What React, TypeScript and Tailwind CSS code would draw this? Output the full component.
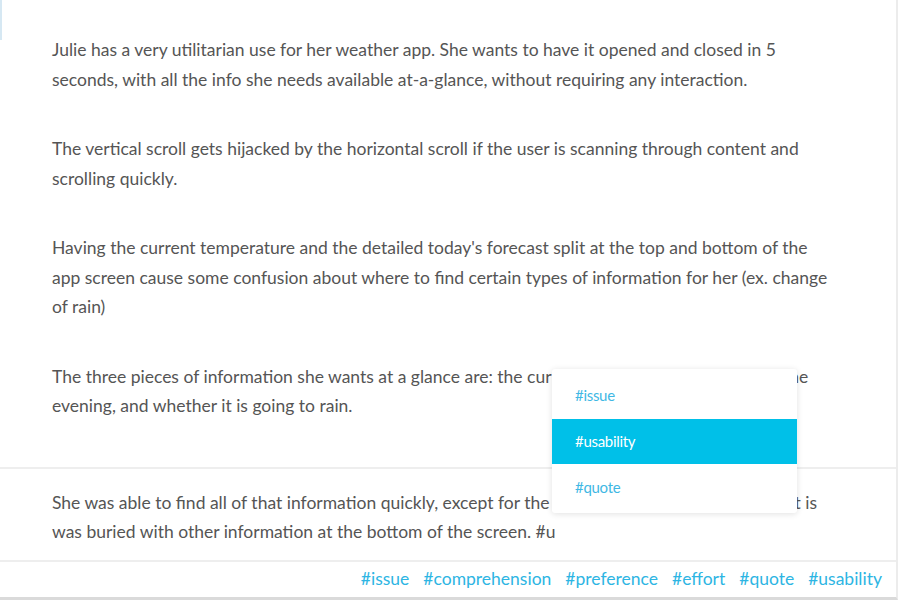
import React from "react";

const font = { fontFamily: "Lato, 'Open Sans', sans-serif" };

export default function App() {
  const tags = ["#issue", "#comprehension", "#preference", "#effort", "#quote", "#usability"];
  return (
    <div className="relative w-[900px] h-[600px] bg-white overflow-hidden" style={font}>
      <div className="absolute left-0 top-0 w-[2px] h-[40px] bg-[#d6e8f3]" />
      <div className="flex flex-col h-full w-[898px] border-r-2 border-[#ececec] border-b-[3px] border-b-[#dadada]">
        <div className="pl-[52px] pr-[20px] pt-[35px] pb-[46px] border-b-2 border-[#eeeeee] text-[17.5px] leading-[29.5px] text-[#555555] flex flex-col gap-[40px] whitespace-nowrap">
          <p>
            Julie has a very utilitarian use for her weather app. She wants to have it opened and closed in 5<br />
            seconds, with all the info she needs available at-a-glance, without requiring any interaction.
          </p>
          <p>
            The vertical scroll gets hijacked by the horizontal scroll if the user is scanning through content and<br />
            scrolling quickly.
          </p>
          <p>
            Having the current temperature and the detailed today's forecast split at the top and bottom of the<br />
            app screen cause some confusion about where to find certain types of information for her (ex. change<br />
            of rain)
          </p>
          <p>
            The three pieces of information she wants at a glance are: the current temperature, the temp in the<br />
            evening, and whether it is going to rain.
          </p>
        </div>
        <div className="pl-[52px] pr-[20px] pt-[19px] pb-[13px] border-b-2 border-[#eeeeee] text-[17.5px] leading-[29.5px] text-[#555555] whitespace-nowrap">
          <p>
            She was able to find all of that information quickly, except for the chance of rain that evening, as it is<br />
            was buried with other information at the bottom of the screen. #u
          </p>
        </div>
        <div className="flex-1 flex items-center justify-end gap-[14px] pr-[14px] text-[17.5px] text-[#2db5e3]">
          {tags.map((t) => (
            <span key={t}>{t}</span>
          ))}
        </div>
      </div>
      <div className="absolute left-[552px] top-[369px] w-[245px] bg-white rounded-[3px] shadow-[0_1px_6px_rgba(0,0,0,0.12)] flex flex-col text-[15px] tracking-[-0.3px]">
        <div className="h-[50px] flex items-center pl-[23px] pt-[2px] text-[#3fb8e4]">#issue</div>
        <div className="h-[45px] flex items-center pl-[23px] bg-[#00c0e8] text-white">#usability</div>
        <div className="h-[49px] flex items-center pl-[23px] text-[#3fb8e4] pb-[2px]">#quote</div>
      </div>
    </div>
  );
}
